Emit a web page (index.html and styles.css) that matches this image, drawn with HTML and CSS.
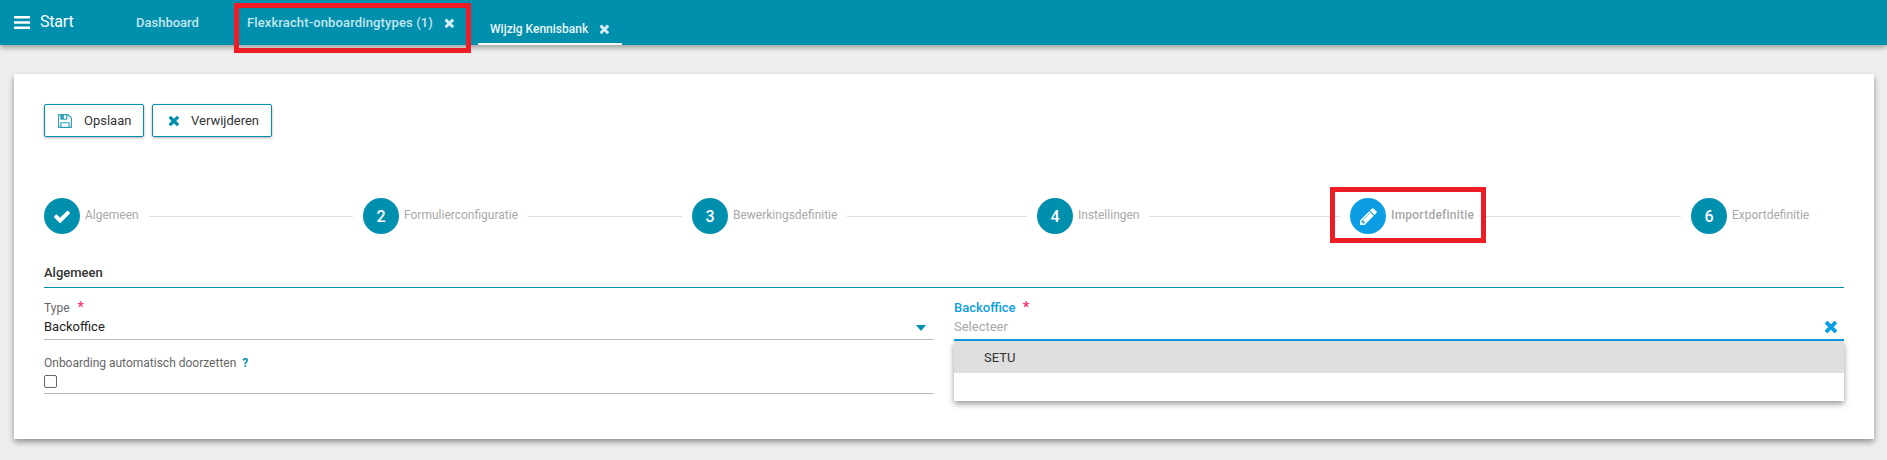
FILE: index.html
```html
<!DOCTYPE html>
<html lang="nl">
<head>
<meta charset="utf-8">
<title>Flexkracht-onboardingtypes</title>
<link rel="stylesheet" href="styles.css">
</head>
<body>
<svg class="sprite" aria-hidden="true">
  <symbol id="i-times" viewBox="210 260 1280 1290"><path d="M1490 1322q0 40-28 68l-136 136q-28 28-68 28t-68-28l-294-294-294 294q-28 28-68 28t-68-28l-136-136q-28-28-28-68t28-68l294-294-294-294q-28-28-28-68t28-68l136-136q28-28 68-28t68 28l294 294 294-294q28-28 68-28t68 28l136 136q28 28 28 68t-28 68l-294 294 294 294q28 28 28 68z"/></symbol>
  <symbol id="i-bars" viewBox="128 320 1536 1152"><path d="M1664 1344v128q0 26-19 45t-45 19h-1408q-26 0-45-19t-19-45v-128q0-26 19-45t45-19h1408q26 0 45 19t19 45zm0-512v128q0 26-19 45t-45 19h-1408q-26 0-45-19t-19-45v-128q0-26 19-45t45-19h1408q26 0 45 19t19 45zm0-512v128q0 26-19 45t-45 19h-1408q-26 0-45-19t-19-45v-128q0-26 19-45t45-19h1408q26 0 45 19t19 45z"/></symbol>
  <symbol id="i-save" viewBox="128 128 1536 1536"><path d="M512 1536h768v-384h-768v384zm896 0h128v-896q0-14-10-38.500t-20-34.500l-281-281q-10-10-34-20t-39-10v416q0 40-28 68t-68 28h-576q-40 0-68-28t-28-68v-416h-128v1280h128v-416q0-40 28-68t68-28h832q40 0 68 28t28 68v416zm-384-928v-320q0-13-9.500-22.500t-22.500-9.500h-192q-13 0-22.500 9.500t-9.500 22.500v320q0 13 9.500 22.500t22.500 9.500h192q13 0 22.500-9.500t9.500-22.500zm640 32v928q0 40-28 68t-68 28h-1344q-40 0-68-28t-28-68v-1344q0-40 28-68t68-28h928q40 0 88 20t76 48l280 280q28 28 48 76t20 88z"/></symbol>
  <symbol id="i-check" viewBox="121 300 1550 1190"><path d="M1671 566q0 40-28 68l-724 724-136 136q-28 28-68 28t-68-28l-136-136-362-362q-28-28-28-68t28-68l136-136q28-28 68-28t68 28l294 295 656-657q28-28 68-28t68 28l136 136q28 28 28 68z"/></symbol>
  <symbol id="i-pencil" viewBox="128 128 1536 1536"><path d="M491 1536l91-91-235-235-91 91v107h128v128h107zm523-928q0-22-22-22-10 0-17 7l-542 542q-7 7-7 17 0 22 22 22 10 0 17-7l542-542q7-7 7-17zm-54-192l416 416-832 832h-416v-416zm683 96q0 53-37 90l-166 166-416-416 166-165q36-38 90-38 53 0 91 38l235 234q37 39 37 91z"/></symbol>
</svg>

<header class="topbar">
  <div class="brand">
    <svg class="icon icon-bars"><use href="#i-bars"/></svg>
    <span class="brand-text">Start</span>
  </div>
  <nav class="tabs">
    <a class="tab tab-dashboard">Dashboard</a>
    <a class="tab tab-flex">Flexkracht-onboardingtypes (1)<svg class="icon icon-close"><use href="#i-times"/></svg></a>
    <a class="tab tab-active">Wijzig Kennisbank<svg class="icon icon-close"><use href="#i-times"/></svg></a>
  </nav>
</header>

<main class="page">
  <section class="card">
    <div class="actions">
      <button class="btn btn-save"><svg class="icon icon-save"><use href="#i-save"/></svg>Opslaan</button>
      <button class="btn btn-delete"><svg class="icon icon-del"><use href="#i-times"/></svg>Verwijderen</button>
    </div>

    <ol class="stepper">
      <li class="step step-1"><span class="bullet"><svg class="icon icon-check"><use href="#i-check"/></svg></span><span class="step-label">Algemeen</span><span class="step-line"></span></li>
      <li class="step step-2"><span class="bullet">2</span><span class="step-label">Formulierconfiguratie</span><span class="step-line"></span></li>
      <li class="step step-3"><span class="bullet">3</span><span class="step-label">Bewerkingsdefinitie</span><span class="step-line"></span></li>
      <li class="step step-4"><span class="bullet">4</span><span class="step-label">Instellingen</span><span class="step-line"></span></li>
      <li class="step step-5"><span class="bullet bullet-current"><svg class="icon icon-pencil"><use href="#i-pencil"/></svg></span><span class="step-label step-label-current">Importdefinitie</span><span class="step-line"></span></li>
      <li class="step step-6"><span class="bullet">6</span><span class="step-label">Exportdefinitie</span></li>
    </ol>

    <h2 class="section-title">Algemeen</h2>

    <div class="form-grid">
      <div class="form-col">
        <div class="field">
          <label class="field-label">Type <span class="req">*</span></label>
          <div class="field-control">
            <span class="value">Backoffice</span>
            <span class="caret"></span>
          </div>
        </div>
        <div class="field field-check">
          <label class="field-label">Onboarding automatisch doorzetten <span class="help">?</span></label>
          <div class="field-control">
            <span class="checkbox"></span>
          </div>
        </div>
      </div>
      <div class="form-col">
        <div class="field field-focus">
          <label class="field-label">Backoffice <span class="req">*</span></label>
          <div class="field-control">
            <span class="placeholder">Selecteer</span>
            <svg class="icon icon-clear"><use href="#i-times"/></svg>
          </div>
          <div class="dropdown">
            <div class="option">SETU</div>
          </div>
        </div>
      </div>
    </div>
  </section>
</main>

<div class="mark mark-tab"></div>
<div class="mark mark-step"></div>
</body>
</html>
```

FILE: styles.css
```css
* { box-sizing: border-box; }
html, body { margin: 0; padding: 0; }
body {
  width: 1887px;
  height: 460px;
  overflow: hidden;
  position: relative;
  background: #eeeeee;
  font-family: Roboto, "Liberation Sans", sans-serif;
  color: #333;
}
.sprite { position: absolute; width: 0; height: 0; }
.icon { display: block; fill: currentColor; flex: none; }

/* top bar */
.topbar {
  display: flex;
  height: 45px;
  padding-left: 14px;
  background: #008fad;
  box-shadow: 0 2px 6px rgba(0, 0, 0, .4);
  color: #fff;
}
.brand { display: flex; align-items: center; width: 122px; padding-bottom: 1px; }
.icon-bars { width: 16px; height: 13px; margin-right: 10px; }
.brand-text { font-size: 16px; line-height: 20px; margin-top: -1px; letter-spacing: -.2px; }
.tabs { display: flex; }
.tab {
  display: flex;
  align-items: center;
  font-size: 13px;
  font-weight: 500;
  color: #c4e6ee;
  line-height: 16px;
  white-space: nowrap;
}
.tab-dashboard { margin-right: 48px; }
.tab-flex { margin-right: 24px; letter-spacing: .13px; }
.tab-active {
  align-self: flex-end;
  height: 31px;
  padding: 0 13px 0 12px;
  color: #eaf6f9;
  border-bottom: 2px solid #fff;
  font-size: 12px;
}
.icon-close { width: 10px; height: 10px; margin-left: 11px; color: #d5edf3; }

/* card */
.page { padding: 29px 13px 0 14px; }
.card {
  height: 365px;
  padding: 30px 30px 0;
  background: #fff;
  box-shadow: 0 3px 6px rgba(0, 0, 0, .4);
}
.actions { display: flex; gap: 8px; }
.btn {
  display: flex;
  align-items: center;
  height: 33px;
  padding: 0 13px;
  background: #fff;
  border: 1px solid #008fad;
  border-radius: 2px;
  box-shadow: 0 1px 3px rgba(0, 0, 0, .3);
  font: 400 13px/16px Roboto, "Liberation Sans", sans-serif;
  color: #333;
}
.btn-save { width: 100px; }
.btn-delete { width: 120px; }
.icon-save { width: 14px; height: 14px; margin-right: 12px; color: #2f9fb8; }
.icon-del { width: 11px; height: 11px; margin-right: 12px; margin-left: 2px; color: #008fad; }

/* stepper */
.stepper {
  display: flex;
  list-style: none;
  margin: 61px 0 0;
  padding: 0;
  height: 36px;
}
.step { display: flex; align-items: center; flex: none; }
.step-1 { width: 319px; }
.step-2 { width: 329px; }
.step-3 { width: 345px; }
.step-4 { width: 313px; }
.step-5 { width: 341px; }
.bullet {
  display: flex;
  align-items: center;
  justify-content: center;
  width: 36px;
  height: 36px;
  flex: none;
  border-radius: 50%;
  background: #008fad;
  color: #fff;
  font-size: 16px;
  font-weight: 500;
}
.bullet-current { background: #0c9ee4; }
.icon-check { width: 16px; height: 13px; }
.icon-pencil { width: 17px; height: 17px; }
.step-label {
  margin-left: 5px;
  font-size: 12px;
  line-height: 14px;
  margin-top: -3px;
  color: #a9a9a9;
  white-space: nowrap;
}
.step-label-current { font-weight: 500; letter-spacing: .24px; }
.step-line { flex: 1; height: 1px; margin: 0 10px; background: #dedede; }

/* section */
.section-title {
  margin: 30px 0 0;
  height: 23px;
  font-size: 13px;
  line-height: 18px;
  font-weight: 500;
  color: #333;
  border-bottom: 1px solid #008fad;
  box-sizing: content-box;
}

/* form */
.form-grid {
  display: grid;
  grid-template-columns: 890px 890px;
  column-gap: 20px;
}
.field { position: relative; height: 52px; padding-top: 12px; }
.field-check { height: 55px; padding-top: 15px; }
.field-label {
  display: block;
  font-size: 12px;
  line-height: 16px;
  color: #666;
}
.req { color: #ff2a63; font-size: 15px; line-height: 10px; margin-left: 5px; }
.help { color: #008fad; font-weight: 700; margin-left: 3px; }
.field-control {
  display: flex;
  align-items: center;
  justify-content: space-between;
  height: 24px;
  padding-bottom: 2px;
  border-bottom: 1px solid #bbb;
  font-size: 13px;
  color: #222;
}
.field-check .field-control { height: 23px; padding-bottom: 0; }
.caret {
  width: 0;
  height: 0;
  margin: 3px 8px 0 0;
  border-left: 5.500px solid transparent;
  border-right: 5.500px solid transparent;
  border-top: 6px solid #008fad;
}
.checkbox {
  width: 13px;
  height: 13px;
  margin-top: -1px;
  border: 1px solid #666;
  border-radius: 2px;
}
.field-focus .field-label { color: #0c9ee4; font-size: 13px; font-weight: 500; }
.field-focus .req { margin-left: 4px; }
.field-focus .field-control { height: 25px; border-bottom: 2px solid #0c9ee4; }
.placeholder { color: #a9a9a9; }
.icon-clear { width: 13px; height: 13px; margin-right: 7px; color: #0c9ee4; }
.dropdown {
  position: absolute;
  left: 0;
  right: 0;
  top: 53px;
  height: 60px;
  background: #fff;
  box-shadow: 0 3px 6px rgba(0, 0, 0, .4);
}
.option {
  height: 32px;
  padding-left: 30px;
  background: #dfdfdf;
  font-size: 13px;
  line-height: 34px;
  color: #333;
}

/* red annotation frames */
.mark { position: absolute; border: 5px solid #ee1c25; }
.mark-tab { left: 234px; top: 3px; width: 237px; height: 50px; }
.mark-step { left: 1330px; top: 187px; width: 156px; height: 56px; }
```
